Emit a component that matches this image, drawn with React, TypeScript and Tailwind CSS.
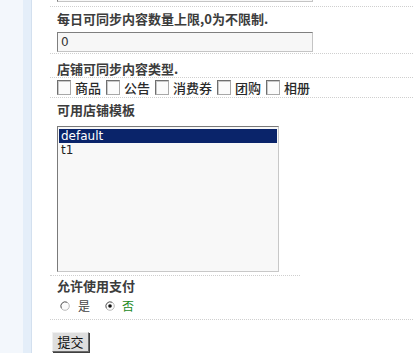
import React from 'react';

const cjk = "font-['Noto_Sans_CJK_SC',sans-serif]";
const latin = "font-['DejaVu_Sans','Noto_Sans_CJK_SC',sans-serif]";

function Line({ short }: { short?: boolean }) {
  return <div className={`h-0 border-t border-dotted border-[#cfcfcf] ${short ? 'w-[250px]' : 'w-full'}`} />;
}

function Label({ children, className = '' }: { children: React.ReactNode; className?: string }) {
  return (
    <div className={`h-[16px] pl-[7px] text-[13px] leading-[16px] font-bold text-[#3c3c3c] ${cjk} ${className}`}>
      {children}
    </div>
  );
}

function Box() {
  return (
    <span className="inline-block h-[15px] w-[14px] shrink-0 border border-[#6f6f6f] border-r-[#a8a8a8] border-b-[#a8a8a8] bg-[#fbfbfb] shadow-[inset_1px_1px_0_#c8c8c8]" />
  );
}

function Radio({ checked }: { checked?: boolean }) {
  return (
    <svg width="10" height="10" viewBox="0 0 10 10" className="shrink-0">
      <circle cx="5" cy="5" r="4.3" fill="#fbfbfb" stroke="#b9b9b9" strokeWidth="1" />
      <path d="M1.4 7.2 A4.3 4.3 0 0 1 7.2 1.4" fill="none" stroke="#707070" strokeWidth="1" />
      {checked && <circle cx="5" cy="5" r="1.8" fill="#111" />}
    </svg>
  );
}

export default function App() {
  const types = ['商品', '公告', '消费券', '团购', '相册'];

  return (
    <div className="flex h-[353px] w-[413px] overflow-hidden bg-white">
      {/* side strip */}
      <div className="w-[23px] shrink-0 bg-[#f3f7fc]" />
      <div className="w-[8px] shrink-0 bg-[#e4eef9]" />
      <div className="w-px shrink-0 bg-[#d3e0ef]" />

      <div className="flex flex-1 flex-col pl-[18px]">
        {/* cut off input from previous row */}
        <div className="pl-[7px]">
          <div className="-mt-[18px] h-[20px] w-[256px] border border-[#7f7f7f] border-r-[#c4c4c4] border-b-[#c4c4c4] bg-[#f7f7f7]" />
        </div>
        <div className="mt-[4px]">
          <Line />
        </div>

        <Label className="mt-[4px]">每日可同步内容数量上限,0为不限制.</Label>
        <div className="mt-[5px] pl-[7px]">
          <div className={`flex h-[20px] w-[256px] items-center border border-[#7f7f7f] border-r-[#c4c4c4] border-b-[#c4c4c4] bg-[#f7f7f7] pl-[3px] text-[12px] text-[#333] ${latin}`}>
            0
          </div>
        </div>
        <div className="mt-[1px]">
          <Line />
        </div>

        <Label className="mt-[7px]">店铺可同步内容类型.</Label>
        <Line />
        <div className={`flex h-[21px] items-center pl-[7px] text-[13px] font-medium text-[#2a2a2a] ${cjk}`}>
          {types.map((t) => (
            <span key={t} className="mr-[5px] flex items-center">
              <Box />
              <span className="ml-[4px] leading-[15px]">{t}</span>
            </span>
          ))}
        </div>
        <Line />

        <Label className="mt-[4px]">可用店铺模板</Label>
        <div className="mt-[8px] pl-[7px]">
          <div className={`h-[146px] w-[222px] border border-[#7a7a7a] border-r-[#c8c8c8] border-b-[#c8c8c8] bg-[#f8f8f8] px-[1px] pt-[2px] text-[12px] leading-[14px] ${latin}`}>
            <div className="h-[14px] bg-[#0a246a] pl-[2px] text-white">default</div>
            <div className="h-[14px] pl-[2px] text-[#222]">t1</div>
          </div>
        </div>
        <div className="mt-[3px]">
          <Line short />
        </div>

        <Label className="mt-[2px]">允许使用支付</Label>
        <div className={`mt-[3px] flex h-[18px] items-center pl-[10px] text-[12px] ${cjk}`}>
          <Radio />
          <span className="ml-[8px] text-[#444]">是</span>
          <span className="ml-[15px]">
            <Radio checked />
          </span>
          <span className="ml-[7px] text-[#1c8a1c]">否</span>
        </div>
        <div className="mt-[4px]">
          <Line />
        </div>

        <div className="mt-[9px] pl-[2px]">
          <button
            type="button"
            className={`h-[20px] w-[37px] border border-[#6a6a6a] border-t-[#f0f0f0] border-l-[#f0f0f0] bg-[#dedede] text-[13px] leading-[16px] text-[#111] shadow-[1px_1px_0_#404040] ${cjk}`}
          >
            提交
          </button>
        </div>
      </div>
    </div>
  );
}
